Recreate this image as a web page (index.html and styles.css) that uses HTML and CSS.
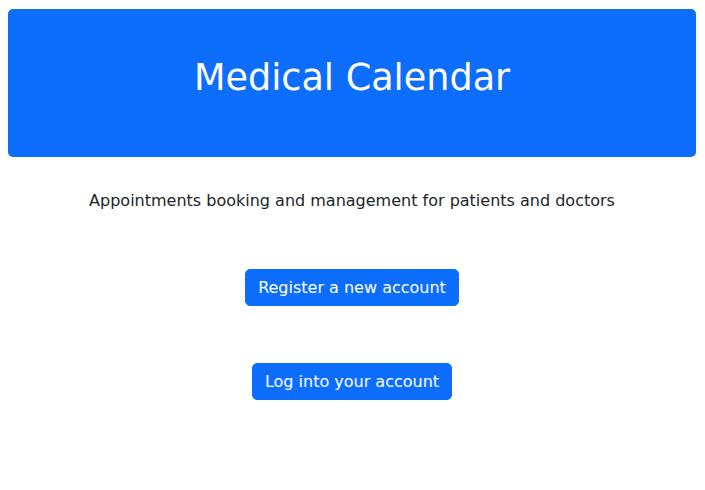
FILE: index.html
```html
<!DOCTYPE html>
<html lang="en">
<head>
<meta charset="utf-8">
<title>Medical Calendar</title>
<link rel="stylesheet" href="styles.css">
</head>
<body>
<div class="page">
  <header class="hero">
    <h1 class="hero-title">Medical Calendar</h1>
  </header>
  <p class="lead">Appointments booking and management for patients and doctors</p>
  <div class="actions">
    <a class="btn" href="#">Register a new account</a>
    <a class="btn" href="#">Log into your account</a>
  </div>
</div>
</body>
</html>
```
FILE: styles.css
```css
* { box-sizing: border-box; }
html, body { margin: 0; padding: 0; background: #fff; }
body {
  font-family: "DejaVu Sans", sans-serif;
  color: #212529;
  font-size: 16px;
  line-height: 1.5;
}
.page {
  padding: 9px 9px 9px 8px;
  display: flex;
  flex-direction: column;
  align-items: center;
}
.hero {
  align-self: stretch;
  height: 148px;
  background: #0d6efd;
  border-radius: 5px;
  padding-top: 47px;
  text-align: center;
}
.hero-title {
  margin: 0;
  color: #fff;
  font-weight: 400;
  font-size: 36.6px;
  line-height: 43px;
}
.lead {
  margin: 32px 0 0;
  line-height: 24px;
  text-align: center;
}
.actions {
  margin-top: 56px;
  display: flex;
  flex-direction: column;
  align-items: center;
  gap: 57px;
}
.btn {
  display: inline-block;
  background: #0d6efd;
  color: #fff;
  text-decoration: none;
  border: 1px solid #0d6efd;
  border-radius: 5px;
  padding: 6px 12px;
  font-size: 16px;
  line-height: 23px;
}
```
